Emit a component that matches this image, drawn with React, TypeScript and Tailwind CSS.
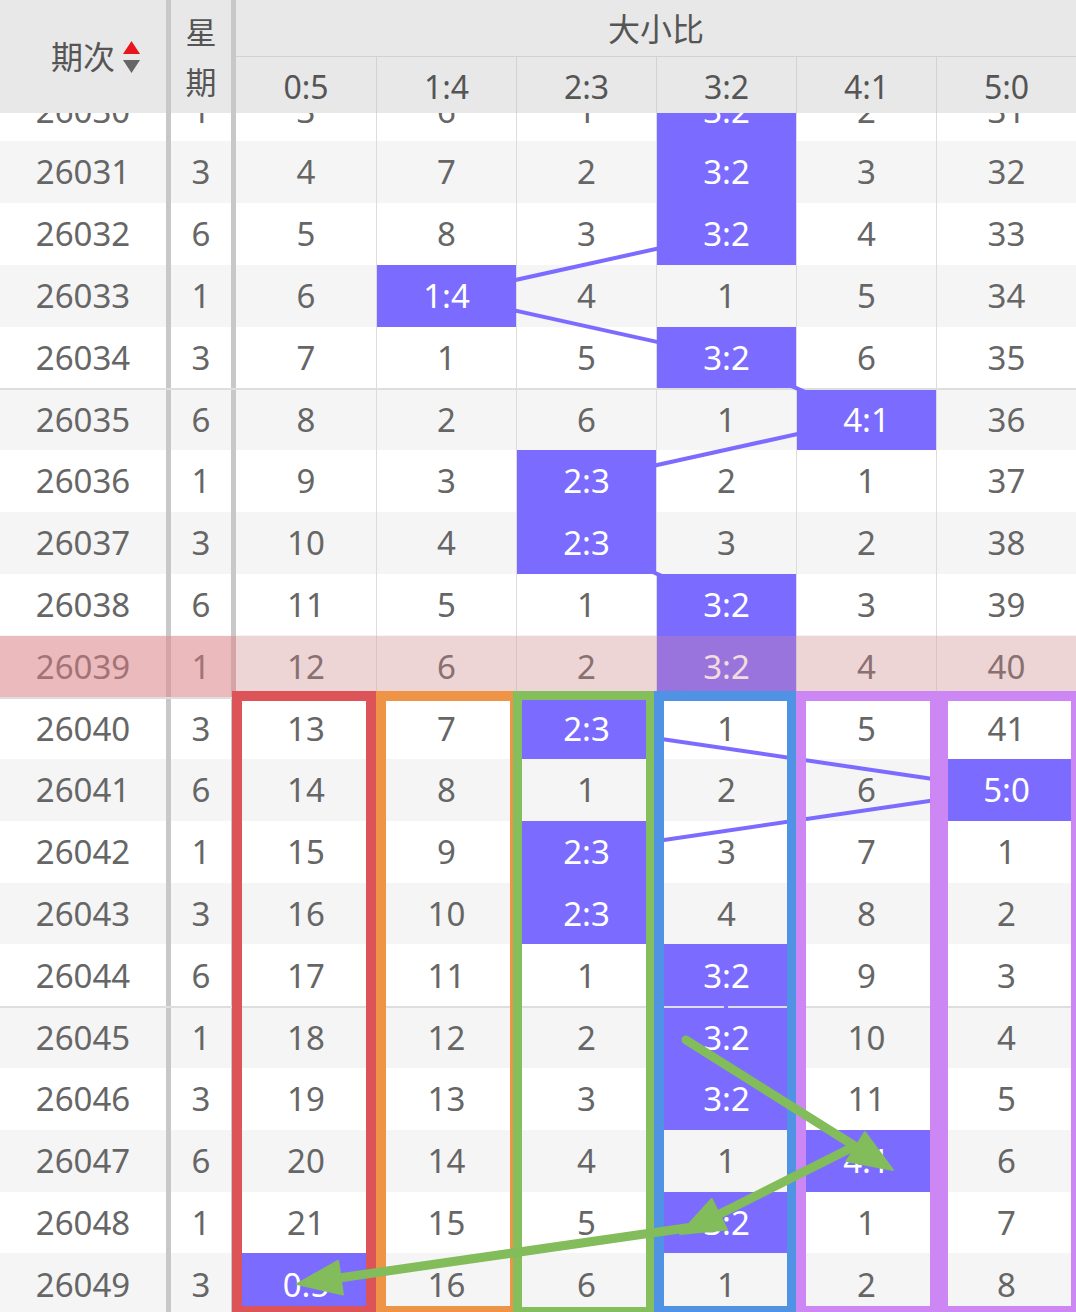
import React from "react"

const LABELS = ["0:5", "1:4", "2:3", "3:2", "4:1", "5:0"]
// winning column per draw, 26030 → 26049
const HITS = [3, 3, 3, 1, 3, 4, 2, 2, 3, 3, 2, 5, 2, 2, 3, 3, 3, 4, 3, 0]
const WEEK = [1, 3, 6]
const ROW_H = 61.8

type Row = { issue: number; week: number; hit: number; cells: (number | string)[] }

function buildRows(): Row[] {
  const miss = [2, 5, 0, 0, 1, 30]
  return HITS.map((hit, i) => {
    const cells = miss.map((m, c) => {
      if (c === hit) {
        miss[c] = 0
        return LABELS[c]
      }
      miss[c] = m + 1
      return m + 1
    })
    return { issue: 26030 + i, week: WEEK[i % 3], hit, cells }
  })
}

const rows = buildRows()

function SortIcon() {
  return (
    <svg width="17" height="32" viewBox="0 0 17 32" className="absolute left-full top-1/2 ml-[8px] -translate-y-1/2">
      <polygon points="8.5,0 17,13 0,13" fill="#e8161c" />
      <polygon points="0,19 17,19 8.5,32" fill="#666" />
    </svg>
  )
}

function Header() {
  return (
    <div className="flex h-[113px] bg-[#e8e8e8] text-[#555]">
      <div className="flex w-[171px] items-center justify-center border-r-[5px] border-[#c8c8c8] text-[32px]">
        <span className="relative">
          期次
          <SortIcon />
        </span>
      </div>
      <div className="flex w-[65px] flex-col items-center justify-center border-r-[5px] border-[#c8c8c8] text-[31px] leading-[50px]">
        <span>星</span>
        <span>期</span>
      </div>
      <div className="flex flex-1 flex-col">
        <div className="flex h-[57px] items-center justify-center border-b-[1.5px] border-[#d2d2d2] pt-[2px] text-[32px]">大小比</div>
        <div className="flex flex-1">
          {LABELS.map((l, c) => (
            <div
              key={l}
              className={`flex w-[140px] items-center justify-center pt-[3px] text-[32px] ${c > 0 ? "border-l-[1.5px] border-[#d2d2d2]" : ""}`}
            >
              {l}
            </div>
          ))}
        </div>
      </div>
    </div>
  )
}

function TrendLines() {
  const cx = (c: number) => 236 + c * 140 + 70
  const cy = (i: number) => i * ROW_H + ROW_H / 2
  return (
    <svg className="pointer-events-none absolute left-0 top-0" width={1076} height={rows.length * ROW_H}>
      {HITS.slice(1).map((h, i) => (
        <line
          key={i}
          x1={cx(HITS[i])}
          y1={cy(i)}
          x2={cx(h)}
          y2={cy(i + 1)}
          stroke="#7b6cff"
          strokeWidth={4}
        />
      ))}
    </svg>
  )
}

function Body() {
  return (
    <div className="relative h-[1199px] overflow-hidden">
      <div className="relative -mt-[33.7px]">
        {rows.map((r, i) => (
          <div
            key={r.issue}
            className={`flex h-[61.8px] text-[33px] text-[#666] ${i % 2 ? "bg-[#f5f5f5]" : "bg-white"} ${
              i % 5 === 0 ? "border-t-2 border-[#dedede]" : ""
            }`}
          >
            <div className="flex w-[171px] items-center justify-center border-r-[5px] border-[#c8c8c8]">
              <span className="relative z-10">{r.issue}</span>
            </div>
            <div className="flex w-[65px] items-center justify-center border-r-[5px] border-[#c8c8c8]">
              <span className="relative z-10">{r.week}</span>
            </div>
            {r.cells.map((v, c) => (
              <div
                key={c}
                className={`flex w-[140px] items-center justify-center ${c > 0 ? "border-l border-[#dcdcdc]" : ""} ${
                  c === r.hit ? "bg-[#7b6cff] text-white" : ""
                }`}
              >
                <span className="relative z-10">{v}</span>
              </div>
            ))}
          </div>
        ))}
        <TrendLines />
        {/* highlighted draw 26039 */}
        <div className="absolute left-0 top-[556.2px] z-20 flex h-[61.8px] w-full">
          <div className="w-[236px] bg-[rgba(223,127,131,0.5)]" />
          <div className="flex-1 bg-[rgba(217,135,140,0.3)]" />
        </div>
      </div>
    </div>
  )
}

function arrowHead(x1: number, y1: number, x2: number, y2: number, len: number, half: number) {
  const d = Math.hypot(x2 - x1, y2 - y1)
  const ux = (x2 - x1) / d
  const uy = (y2 - y1) / d
  const bx = x2 - ux * len
  const by = y2 - uy * len
  return {
    base: [bx, by],
    points: `${x2},${y2} ${bx - uy * half},${by + ux * half} ${bx + uy * half},${by - ux * half}`,
  }
}

const ARROWS = [
  [686, 1040, 893, 1170],
  [853, 1147, 680, 1234],
  [693, 1227, 297, 1284],
]

function Annotations() {
  return (
    <div className="pointer-events-none absolute inset-0 z-30">
      <div className="absolute left-[232px] top-[691px] h-[625px] w-[144px] border-[10px] border-[#dc5457]" />
      <div className="absolute left-[376px] top-[691px] h-[625px] w-[144px] border-[10px] border-[#ef9346]" />
      <div className="absolute left-[513px] top-[691px] h-[625px] w-[142px] border-[9px] border-[#84be5d]" />
      <div className="absolute left-[654px] top-[691px] h-[625px] w-[143px] border-[10px] border-[#5093e5]" />
      <div className="absolute left-[796px] top-[691px] h-[625px] w-[144px] border-[10px] border-[#cd87f5]" />
      <div className="absolute left-[938px] top-[691px] h-[625px] w-[143px] border-[10px] border-[#cd87f5]" />
      <svg className="absolute left-0 top-0" width={1076} height={1312}>
        {ARROWS.map(([x1, y1, x2, y2], i) => {
          const h = arrowHead(x1, y1, x2, y2, 44, 17)
          return (
            <g key={i} fill="#82bc5b" stroke="#82bc5b">
              <line x1={x1} y1={y1} x2={h.base[0]} y2={h.base[1]} strokeWidth={9} strokeLinecap="round" />
              <polygon points={h.points} strokeWidth={2} strokeLinejoin="round" />
            </g>
          )
        })}
      </svg>
    </div>
  )
}

export default function App() {
  return (
    <div className="relative h-[1312px] w-[1076px] overflow-hidden bg-white font-['Noto_Sans','Noto_Sans_CJK_SC',sans-serif]">
      <Header />
      <Body />
      <Annotations />
    </div>
  )
}
